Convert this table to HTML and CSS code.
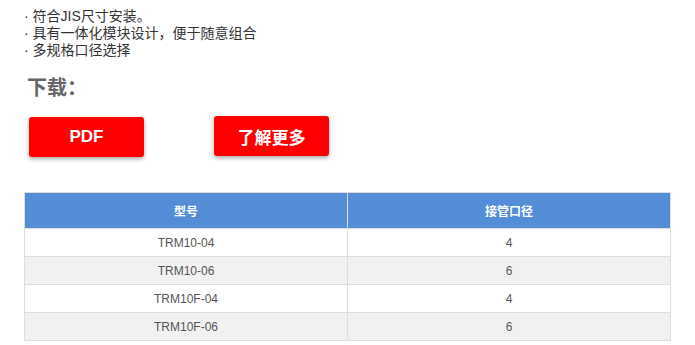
FILE: index.html
```html
<!DOCTYPE html>
<html lang="zh-CN">
<head>
    <meta charset="UTF-8">
    <meta name="viewport" content="width=device-width, initial-scale=1.0">
    <title>产品详情</title>
    <link rel="stylesheet" href="styles.css">
</head>
<body>
    <ul class="features">
        <li>· 符合JIS尺寸安装。</li>
        <li>· 具有一体化模块设计，便于随意组合</li>
        <li>· 多规格口径选择</li>
    </ul>

    <h2 class="download-title">下载：</h2>
    <div class="buttons">
        <a class="btn" href="#">PDF</a>
        <a class="btn" href="#">了解更多</a>
    </div>

    <table class="spec">
        <thead>
            <tr>
                <th>型号</th>
                <th>接管口径</th>
            </tr>
        </thead>
        <tbody>
            <tr><td>TRM10-04</td><td>4</td></tr>
            <tr><td>TRM10-06</td><td>6</td></tr>
            <tr><td>TRM10F-04</td><td>4</td></tr>
            <tr><td>TRM10F-06</td><td>6</td></tr>
        </tbody>
    </table>
</body>
</html>
```

FILE: styles.css
```css
body {
    margin: 0;
    padding: 8px 24px 0 24px;
    font-family: "Liberation Sans", Arial, "Noto Sans CJK SC", sans-serif;
    color: #333;
    background-color: white;
}
.features {
    list-style: none;
    margin: 0;
    padding: 0;
    font-size: 14px;
    line-height: 17px;
}
.download-title {
    margin: 17px 0 0 3px;
    font-size: 20px;
    line-height: 24px;
    font-weight: bold;
    color: #666;
}
.buttons {
    display: flex;
    gap: 70px;
    margin: 17px 0 0 5px;
    align-items: flex-start;
}
.btn {
    display: flex;
    align-items: center;
    justify-content: center;
    width: 115px;
    height: 40px;
    background-color: #ff0000;
    color: white;
    font-size: 17px;
    font-weight: bold;
    text-decoration: none;
    border-radius: 3px;
    box-shadow: 0 2px 4px rgba(0, 0, 0, 0.35);
}
.btn + .btn {
    margin-top: -1px;
}
.spec {
    width: 647px;
    margin-top: 35px;
    border-collapse: collapse;
    table-layout: fixed;
    font-size: 12px;
    color: #555;
}
.spec th, .spec td {
    padding: 0;
    border: 1px solid #ddd;
    text-align: center;
}
.spec th {
    height: 35px;
    background-color: #538dd5;
    color: white;
    font-weight: bold;
}
.spec td {
    height: 27px;
}
.spec tbody tr:nth-child(even) {
    background-color: #f1f1f1;
}
```
